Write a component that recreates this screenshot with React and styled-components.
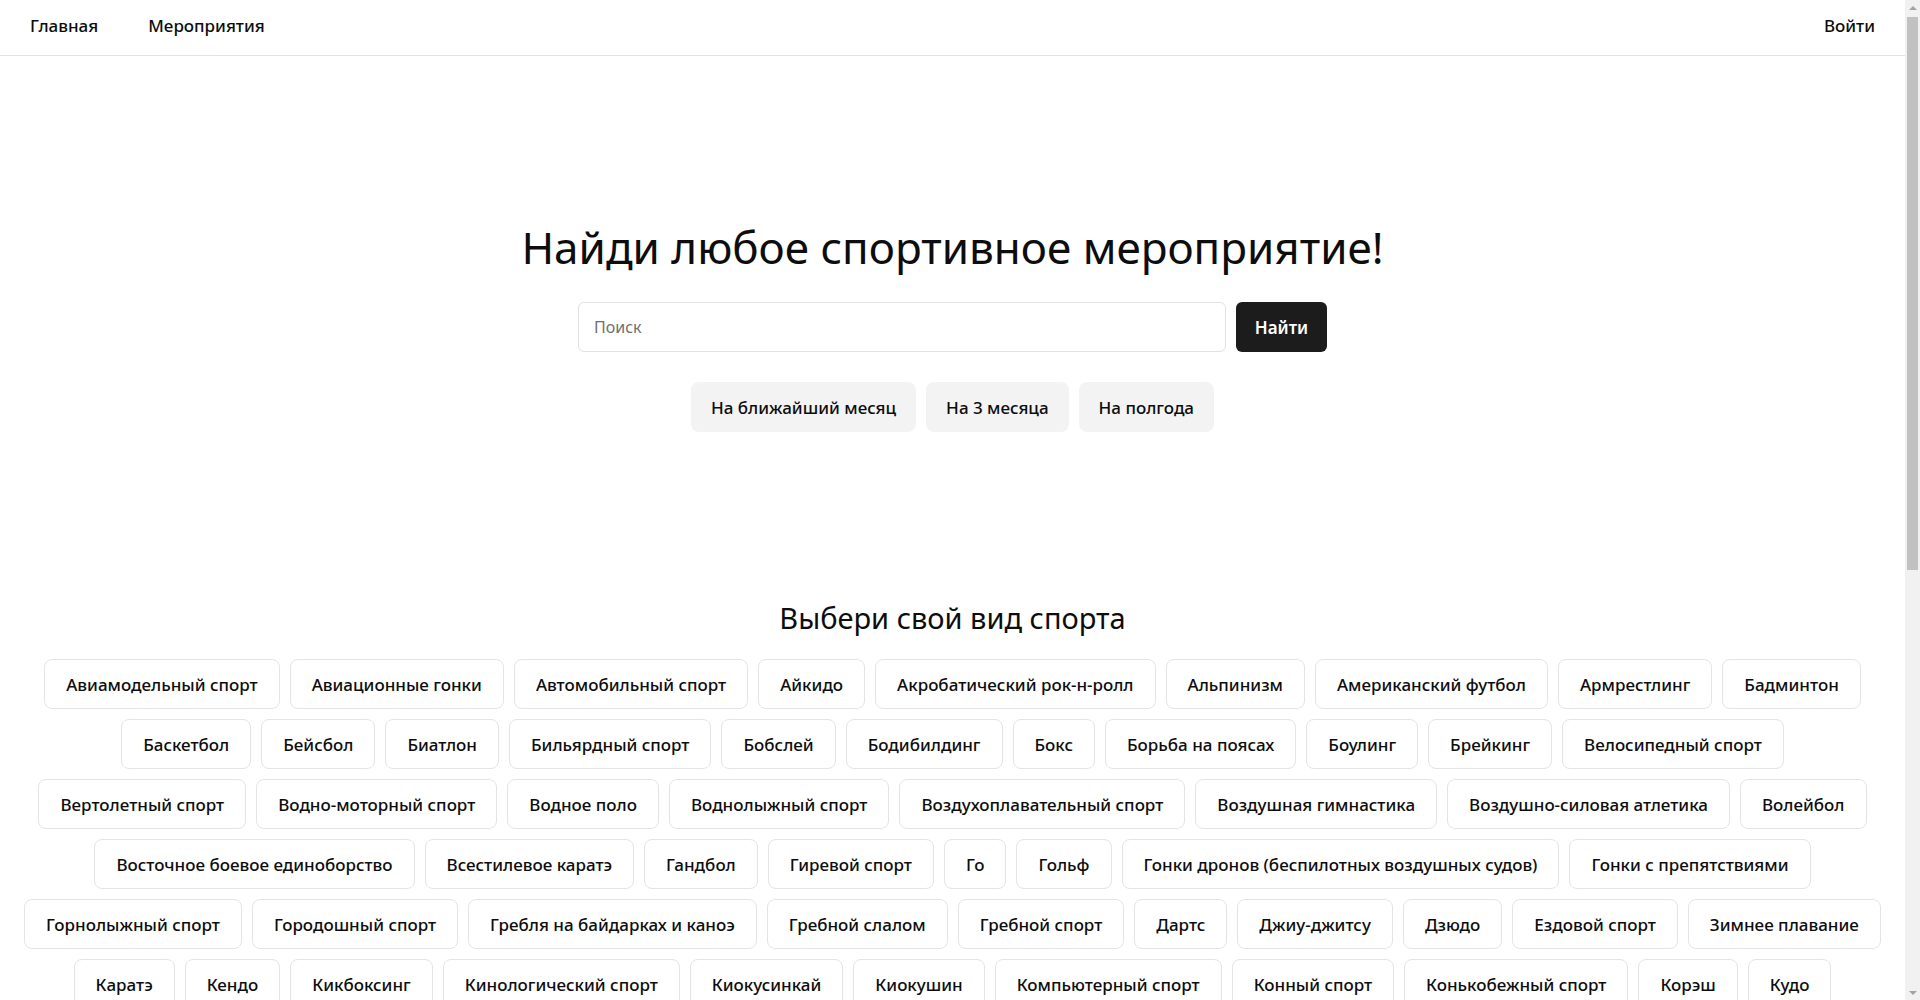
import React from "react";
import styled, { createGlobalStyle } from "styled-components";

const GlobalStyle = createGlobalStyle`
  body {
    margin: 0;
    padding: 0 15px 0 0;
    background: #ffffff;
    color: #111111;
    font-family: "Noto Sans", "Open Sans", sans-serif;
  }
  * {
    box-sizing: border-box;
  }
`;

const sportRows = [
  ["Авиамодельный спорт", "Авиационные гонки", "Автомобильный спорт", "Айкидо", "Акробатический рок-н-ролл", "Альпинизм", "Американский футбол", "Армрестлинг", "Бадминтон"],
  ["Баскетбол", "Бейсбол", "Биатлон", "Бильярдный спорт", "Бобслей", "Бодибилдинг", "Бокс", "Борьба на поясах", "Боулинг", "Брейкинг", "Велосипедный спорт"],
  ["Вертолетный спорт", "Водно-моторный спорт", "Водное поло", "Воднолыжный спорт", "Воздухоплавательный спорт", "Воздушная гимнастика", "Воздушно-силовая атлетика", "Волейбол"],
  ["Восточное боевое единоборство", "Всестилевое каратэ", "Гандбол", "Гиревой спорт", "Го", "Гольф", "Гонки дронов (беспилотных воздушных судов)", "Гонки с препятствиями"],
  ["Горнолыжный спорт", "Городошный спорт", "Гребля на байдарках и каноэ", "Гребной слалом", "Гребной спорт", "Дартс", "Джиу-джитсу", "Дзюдо", "Ездовой спорт", "Зимнее плавание"],
  ["Каратэ", "Кендо", "Кикбоксинг", "Кинологический спорт", "Киокусинкай", "Киокушин", "Компьютерный спорт", "Конный спорт", "Конькобежный спорт", "Корэш", "Кудо"],
  ["Легкая атлетика", "Лыжное двоеборье", "Лыжные гонки", "Настольный теннис", "Парусный спорт", "Плавание", "Прыжки в воду", "Пулевая стрельба", "Регби"],
];

const periods = ["На ближайший месяц", "На 3 месяца", "На полгода"];

// the page scrollbar seen at the right edge
const ScrollRail = styled.div`
  position: fixed;
  top: 0;
  right: 0;
  width: 15px;
  height: 100vh;
  display: flex;
  flex-direction: column;
  align-items: center;
  background: #f1f1f1;
`;

const ScrollArrow = styled.div`
  height: 15px;
  display: flex;
  align-items: center;
  justify-content: center;
  &::before {
    content: "";
    border-left: 4px solid transparent;
    border-right: 4px solid transparent;
    ${p => (p.$down ? "border-top: 4px solid #a3a3a3;" : "border-bottom: 4px solid #a3a3a3;")}
  }
`;

const ScrollThumb = styled.div`
  width: 11px;
  height: 553px;
  margin-top: 2px;
  background: #c1c1c1;
`;

const ScrollSpace = styled.div`
  flex: 1;
`;

const Header = styled.header`
  height: 56px;
  display: flex;
  align-items: center;
  justify-content: space-between;
  padding: 0 30px 4px;
  border-bottom: 1px solid #e3e3e3;
`;

const Nav = styled.nav`
  display: flex;
  gap: 50px;
`;

const NavLink = styled.a`
  font-size: 17px;
  font-weight: 500;
  color: #0d0d0d;
  text-decoration: none;
  cursor: pointer;
`;

const Hero = styled.section`
  display: flex;
  flex-direction: column;
  align-items: center;
  padding-top: 165px;
`;

const Title = styled.h1`
  margin: 0 0 29px;
  font-size: 44px;
  line-height: 52px;
  font-weight: 400;
  color: #0d0d0d;
`;

const SearchForm = styled.form`
  display: flex;
  gap: 10px;
`;

const SearchInput = styled.input`
  width: 648px;
  height: 50px;
  padding: 0 15px;
  border: 1px solid #e2e2e2;
  border-radius: 6px;
  font-family: inherit;
  font-size: 16px;
  outline: none;
  &::placeholder {
    color: #707070;
  }
`;

const SearchButton = styled.button`
  width: 91px;
  height: 50px;
  border: none;
  border-radius: 6px;
  background: #1c1c1c;
  color: #ffffff;
  font-family: inherit;
  font-size: 17px;
  font-weight: 600;
  cursor: pointer;
`;

const PeriodRow = styled.div`
  display: flex;
  gap: 10px;
  margin-top: 30px;
`;

const PeriodButton = styled.button`
  height: 50px;
  padding: 0 20px;
  border: none;
  border-radius: 8px;
  background: #f3f3f3;
  color: #0d0d0d;
  font-family: inherit;
  font-size: 17px;
  font-weight: 500;
  cursor: pointer;
`;

const Sports = styled.section`
  display: flex;
  flex-direction: column;
  align-items: center;
  padding: 168px 20px 40px;
`;

const SectionTitle = styled.h2`
  margin: 0 0 23px;
  font-size: 29px;
  line-height: 36px;
  font-weight: 400;
  color: #0d0d0d;
`;

const TagList = styled.div`
  display: flex;
  flex-direction: column;
  align-items: center;
  gap: 10px;
`;

const TagRow = styled.div`
  display: flex;
  justify-content: center;
  gap: 10px;
`;

const Tag = styled.button`
  height: 50px;
  padding: 0 21px;
  border: 1px solid #e4e4e4;
  border-radius: 8px;
  background: #ffffff;
  color: #0d0d0d;
  font-family: inherit;
  font-size: 17px;
  font-weight: 500;
  white-space: nowrap;
  cursor: pointer;
`;

const App = () => (
  <>
    <GlobalStyle />
    <Header>
      <Nav>
        <NavLink>Главная</NavLink>
        <NavLink>Мероприятия</NavLink>
      </Nav>
      <NavLink>Войти</NavLink>
    </Header>
    <Hero>
      <Title>Найди любое спортивное мероприятие!</Title>
      <SearchForm onSubmit={e => e.preventDefault()}>
        <SearchInput placeholder="Поиск" />
        <SearchButton type="submit">Найти</SearchButton>
      </SearchForm>
      <PeriodRow>
        {periods.map(p => (
          <PeriodButton key={p}>{p}</PeriodButton>
        ))}
      </PeriodRow>
    </Hero>
    <Sports>
      <SectionTitle>Выбери свой вид спорта</SectionTitle>
      <TagList>
        {sportRows.map((row, i) => (
          <TagRow key={i}>
            {row.map(sport => (
              <Tag key={sport}>{sport}</Tag>
            ))}
          </TagRow>
        ))}
      </TagList>
    </Sports>
    <ScrollRail>
      <ScrollArrow />
      <ScrollThumb />
      <ScrollSpace />
      <ScrollArrow $down />
    </ScrollRail>
  </>
);

export default App;
